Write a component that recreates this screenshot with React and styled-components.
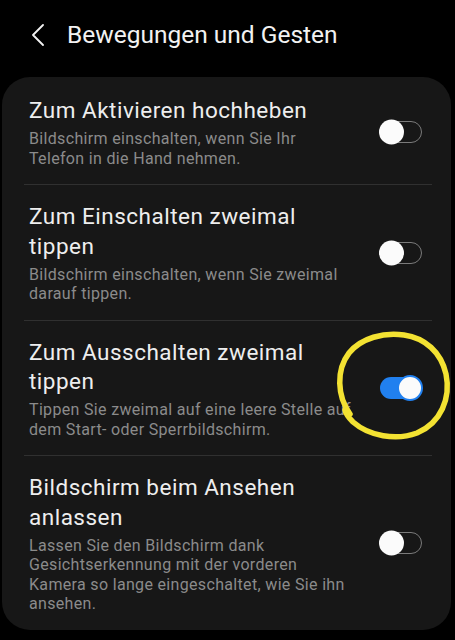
import React from "react";
import styled, { createGlobalStyle } from "styled-components";

const Global = createGlobalStyle`
  html, body { margin: 0; padding: 0; background: #000; }
  body { font-family: Roboto, "Noto Sans", sans-serif; -webkit-font-smoothing: antialiased; }
`;

const Screen = styled.div`
  width: 455px;
  height: 640px;
  background: #000;
  overflow: hidden;
`;

const Header = styled.header`
  display: flex;
  align-items: center;
  height: 77px;
  padding-left: 30px;
  padding-bottom: 7px;
  box-sizing: border-box;
`;

const BackButton = styled.button`
  display: flex;
  align-items: center;
  justify-content: center;
  width: 16px;
  height: 24px;
  padding: 0;
  margin: 0 21px 0 0;
  border: 0;
  background: none;
  color: #f2f2f2;
`;

const Title = styled.h1`
  margin: 0;
  font-size: 24.5px;
  font-weight: 400;
  line-height: 28px;
  color: #f2f2f2;
  letter-spacing: 0;
`;

const Card = styled.section`
  margin: 0 4px 0 2px;
  padding-top: 2px;
  background: #171717;
  border-radius: 28px;
  display: flex;
  flex-direction: column;
`;

const Row = styled.div`
  position: relative;
  display: flex;
  align-items: center;
  padding: 17px 29px 16px 27px;
`;

const TextBlock = styled.div`
  flex: 1;
  min-width: 0;
  white-space: nowrap;
`;

const RowTitle = styled.div`
  font-size: 22.5px;
  line-height: 29.5px;
  letter-spacing: 0.5px;
  color: #eeeeee;
`;

const RowSub = styled.div`
  margin-top: 3.5px;
  font-size: 16px;
  line-height: 19.5px;
  letter-spacing: 0.33px;
  color: #8b8b8b;
`;

const Divider = styled.div`
  height: 1px;
  background: #303030;
  margin: 0 19px 0 22px;
`;

const Track = styled.div`
  position: relative;
  flex: none;
  width: 42px;
  height: 22px;
  border-radius: 12px;
  box-sizing: border-box;
  border: ${(p) => (p.$on ? "none" : "1.5px solid #7a7a7a")};
  background: ${(p) => (p.$on ? "#2180ef" : "transparent")};
`;

const Knob = styled.div`
  position: absolute;
  top: 50%;
  width: 25px;
  height: 25px;
  border-radius: 50%;
  background: #fbfbfb;
  box-sizing: border-box;
  transform: translateY(-50%);
  ${(p) =>
    p.$on
      ? "right: -1px; border: 2px solid #2180ef; width: 26px; height: 26px;"
      : "left: -2px;"}
`;

const Marker = styled.svg`
  position: absolute;
  left: 334px;
  top: 9px;
  width: 118px;
  height: 112px;
  pointer-events: none;
  overflow: visible;
`;

function Toggle({ on }) {
  return (
    <Track $on={on}>
      <Knob $on={on} />
    </Track>
  );
}

const rows = [
  {
    title: ["Zum Aktivieren hochheben"],
    sub: ["Bildschirm einschalten, wenn Sie Ihr", "Telefon in die Hand nehmen."],
    on: false,
  },
  {
    title: ["Zum Einschalten zweimal", "tippen"],
    sub: ["Bildschirm einschalten, wenn Sie zweimal", "darauf tippen."],
    on: false,
  },
  {
    title: ["Zum Ausschalten zweimal", "tippen"],
    sub: ["Tippen Sie zweimal auf eine leere Stelle auf", "dem Start- oder Sperrbildschirm."],
    on: true,
    marked: true,
  },
  {
    title: ["Bildschirm beim Ansehen", "anlassen"],
    sub: [
      "Lassen Sie den Bildschirm dank",
      "Gesichtserkennung mit der vorderen",
      "Kamera so lange eingeschaltet, wie Sie ihn",
      "ansehen.",
    ],
    on: false,
  },
];

const lines = (arr) =>
  arr.map((l, i) => (
    <React.Fragment key={i}>
      {i > 0 && <br />}
      {l}
    </React.Fragment>
  ));

export default function App() {
  return (
    <Screen>
      <Global />
      <Header>
        <BackButton aria-label="Zurück">
          <svg width="14" height="22" viewBox="0 0 14 22">
            <path d="M12 1 L2 11 L12 21" fill="none" stroke="currentColor" strokeWidth="1.8" strokeLinecap="round" strokeLinejoin="round" />
          </svg>
        </BackButton>
        <Title>Bewegungen und Gesten</Title>
      </Header>
      <Card>
        {rows.map((r, i) => (
          <React.Fragment key={i}>
            {i > 0 && <Divider />}
            <Row>
              <TextBlock>
                <RowTitle>{lines(r.title)}</RowTitle>
                <RowSub>{lines(r.sub)}</RowSub>
              </TextBlock>
              <Toggle on={r.on} />
              {r.marked && (
                <Marker viewBox="336 330 118 112">
                  <path
                    d="M350 414 C337 396 336 370 349 353 C361 338 384 332 404 335 C425 338 441 352 446 374 C451 398 441 423 417 433 C396 441 369 436 353 422 C349 418 346 414 345 410"
                    fill="none"
                    stroke="#f3e232"
                    strokeWidth="5.5"
                    strokeLinecap="round"
                    strokeLinejoin="round"
                  />
                </Marker>
              )}
            </Row>
          </React.Fragment>
        ))}
      </Card>
    </Screen>
  );
}
